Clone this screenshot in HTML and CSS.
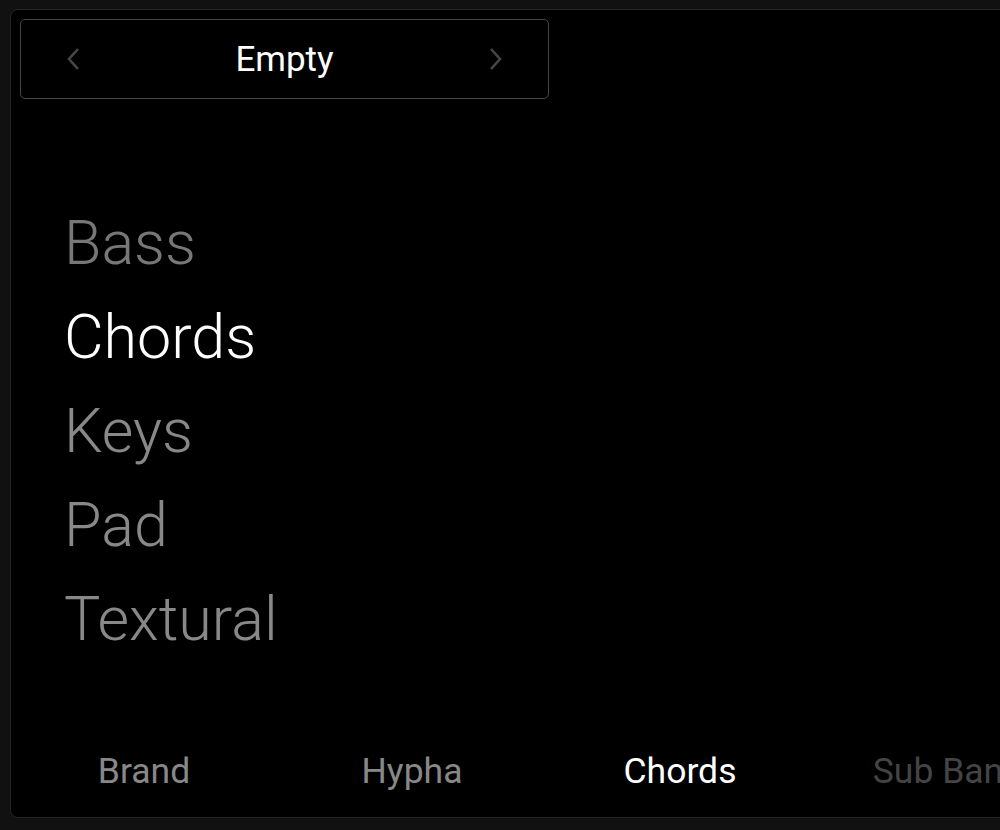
FILE: index.html
```html
<!DOCTYPE html>
<html>
<head>
<meta charset="utf-8">
<link rel="stylesheet" href="styles.css">
</head>
<body>
<div class="panel">
  <div class="selector">
    <svg class="chev" width="15" height="24" viewBox="0 0 15 24"><polyline points="12,2 3,12 12,22" fill="none" stroke="#474747" stroke-width="2.6"/></svg>
    <span class="sel-label">Empty</span>
    <svg class="chev" width="15" height="24" viewBox="0 0 15 24"><polyline points="3,2 12,12 3,22" fill="none" stroke="#474747" stroke-width="2.6"/></svg>
  </div>
  <ul class="cats">
    <li class="cat dim">Bass</li>
    <li class="cat active">Chords</li>
    <li class="cat">Keys</li>
    <li class="cat">Pad</li>
    <li class="cat">Textural</li>
  </ul>
  <div class="tabs">
    <div class="tab">Brand</div>
    <div class="tab">Hypha</div>
    <div class="tab active">Chords</div>
    <div class="tab faded">Sub Band</div>
  </div>
</div>
</body>
</html>
```
FILE: styles.css
```css
html, body {
  margin: 0;
  padding: 0;
  background: #111;
  overflow: hidden;
  height: 830px;
  font-family: Roboto, "Noto Sans", sans-serif;
}
.panel {
  box-sizing: border-box;
  margin: 9px 0 0 10px;
  width: 1010px;
  height: 809px;
  background: #000;
  border: 1px solid #252525;
  border-radius: 8px;
  padding: 9px 0 0 9px;
  display: flex;
  flex-direction: column;
  overflow: hidden;
}
.selector {
  box-sizing: border-box;
  width: 529px;
  height: 80px;
  border: 1px solid #454545;
  border-radius: 5px;
  display: flex;
  align-items: center;
  justify-content: space-between;
  padding: 0 45px 0 45px;
  flex-shrink: 0;
}
.sel-label {
  color: #fff;
  font-size: 35px;
  font-weight: 400;
}
.cats {
  list-style: none;
  margin: 97px 0 0 0;
  padding: 0 0 0 44px;
}
.cat {
  font-size: 61px;
  font-weight: 300;
  line-height: 94px;
  color: #888;
}
.cat.dim { color: #777; }
.cat.active { color: #fff; }
.tabs {
  display: flex;
  margin-top: auto;
  margin-left: -10px;
  padding-bottom: 26px;
}
.tab {
  flex: 0 0 268px;
  text-align: center;
  font-size: 35.5px;
  line-height: 40px;
  color: #888;
  white-space: nowrap;
}
.tab.active { color: #fff; }
.tab.faded { color: #444; }
```
